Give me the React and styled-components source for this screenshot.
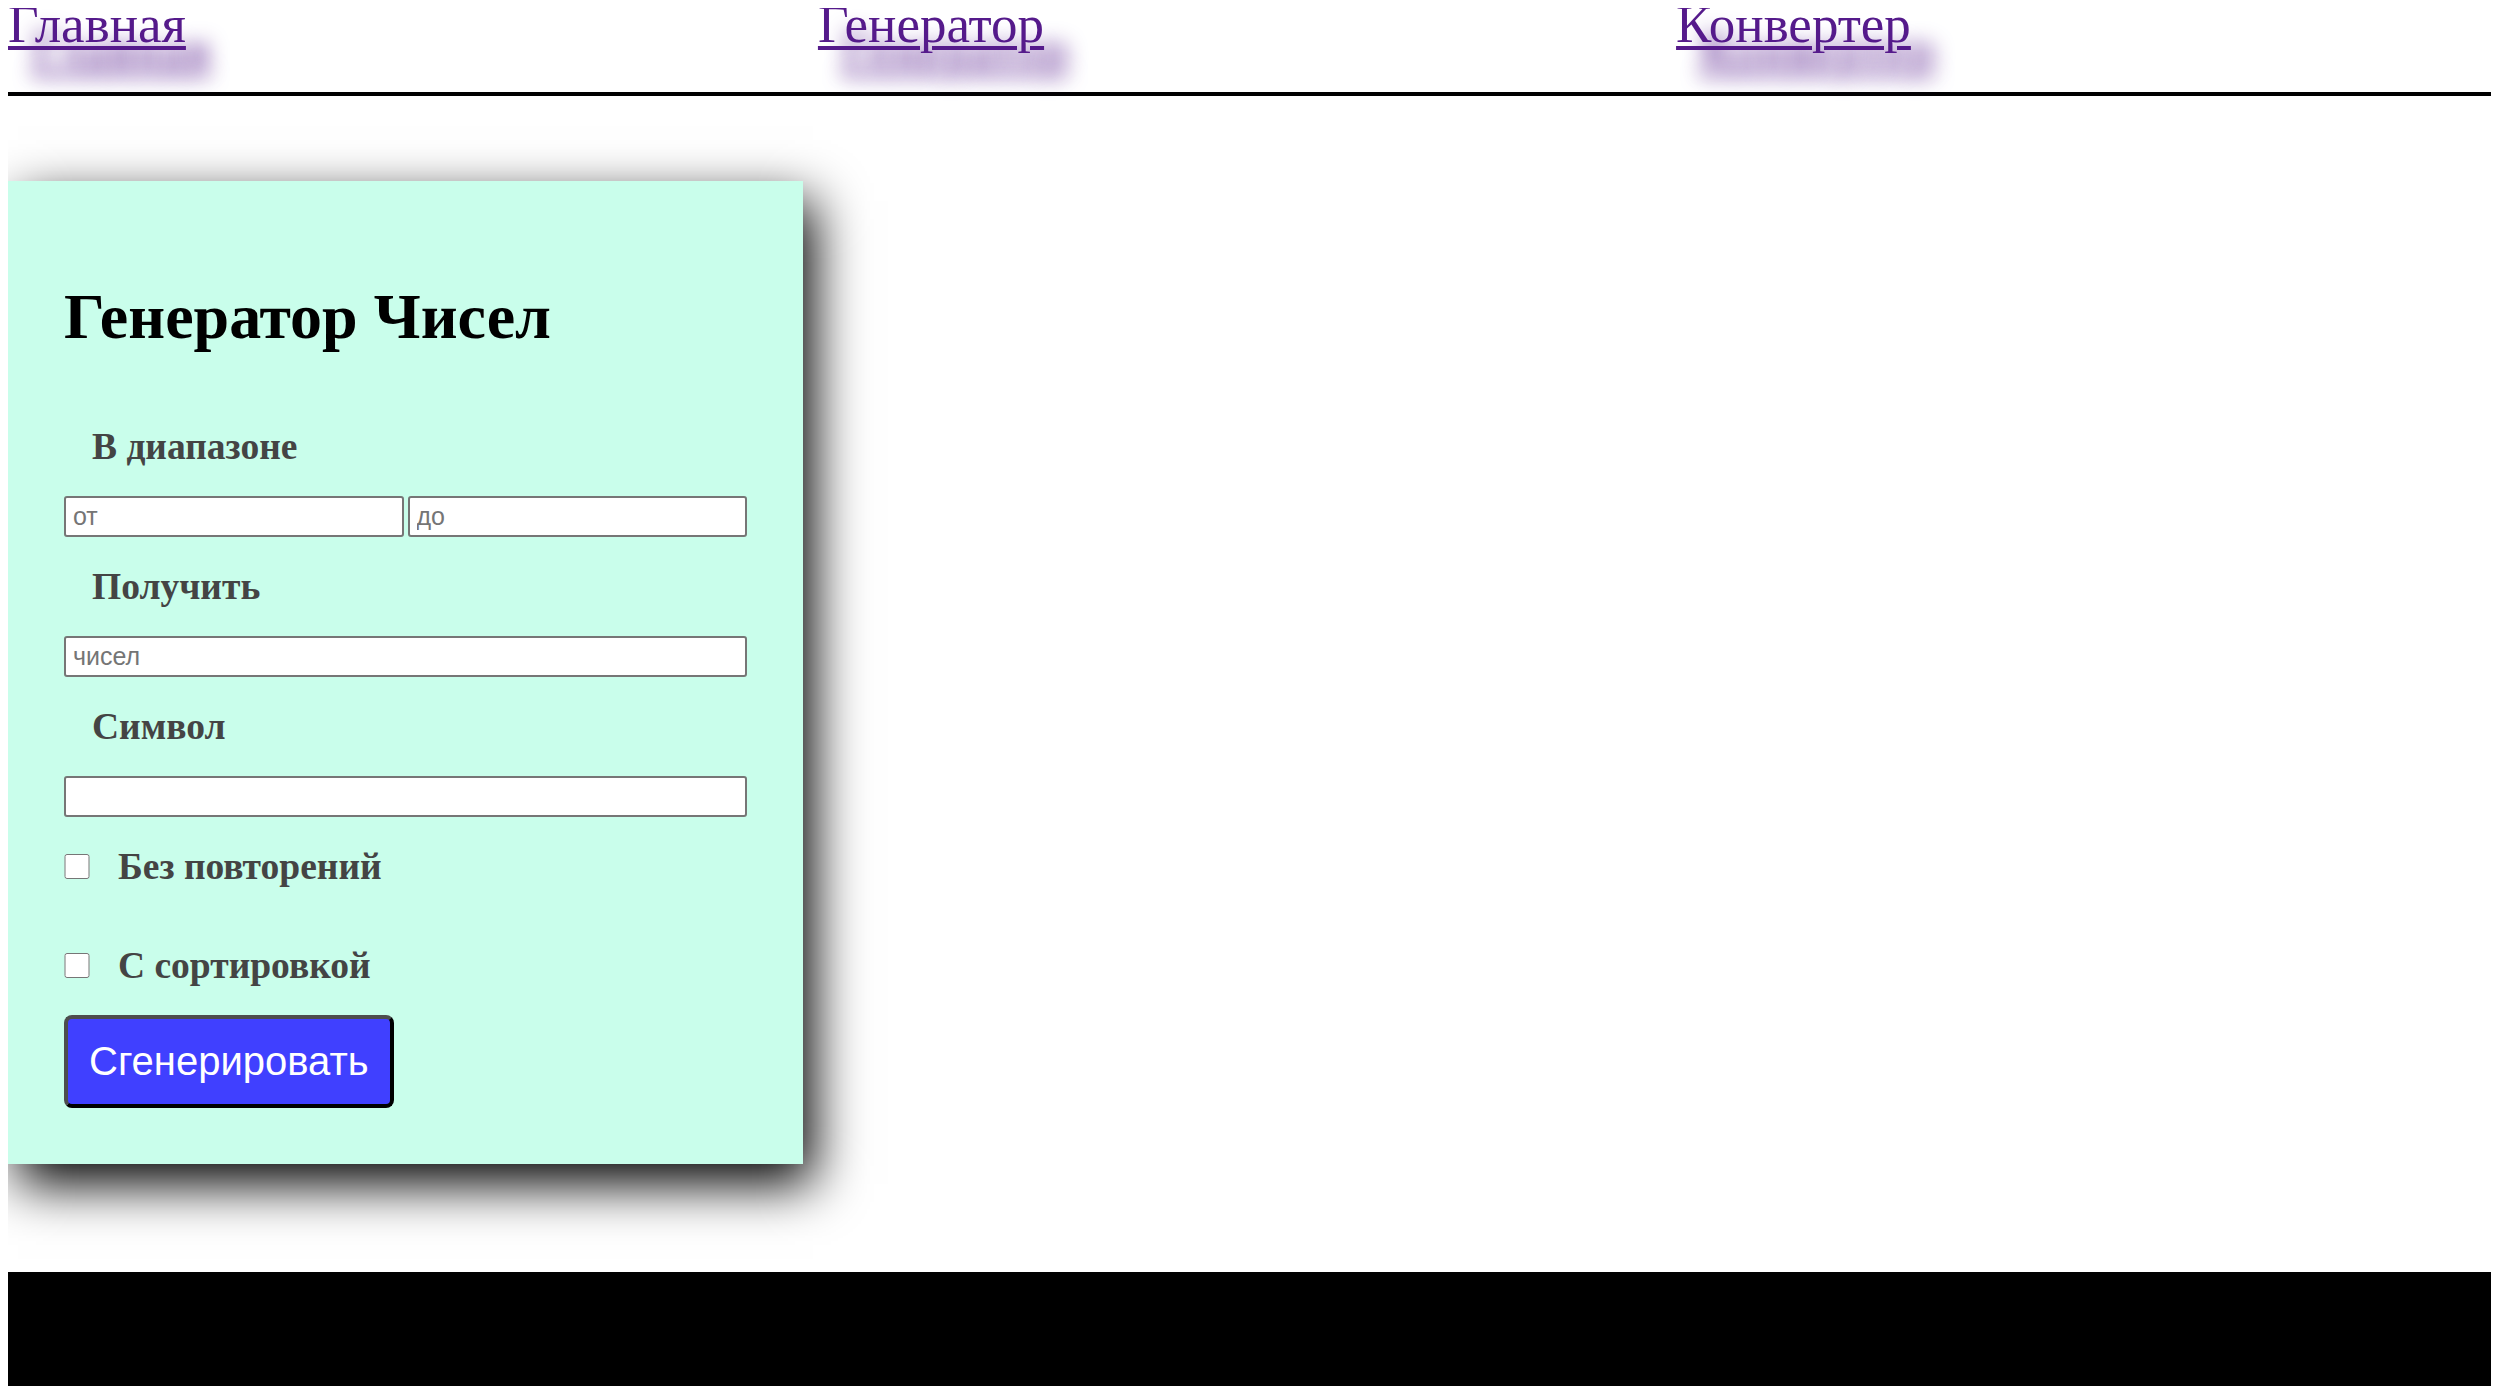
import styled, { createGlobalStyle } from "styled-components"

const GlobalStyle = createGlobalStyle`
  html {
    overflow: hidden;
  }

  body {
    margin: 8px 8px 0;
    font-family: "Liberation Serif", "Times New Roman", serif;
    background: #fff;
  }
`

const links = ["Главная", "Генератор", "Конвертер"]

const App = () => {
  return (
    <>
      <GlobalStyle />
      <Header>
        {links.map((label) => (
          <NavLink key={label} href="#">
            {label}
          </NavLink>
        ))}
      </Header>

      <Card>
        <Title>Генератор Чисел</Title>
        <Form onSubmit={(e) => e.preventDefault()}>
          <FieldLabel>В диапазоне</FieldLabel>
          <Row>
            <TextInput type="number" placeholder="от" />
            <TextInput type="number" placeholder="до" />
          </Row>

          <FieldLabel>Получить</FieldLabel>
          <TextInput type="number" placeholder="чисел" />

          <FieldLabel>Символ</FieldLabel>
          <TextInput type="text" />

          <CheckRow>
            <Checkbox type="checkbox" />
            Без повторений
          </CheckRow>
          <CheckRow>
            <Checkbox type="checkbox" />
            С сортировкой
          </CheckRow>

          <GenerateButton type="submit">Сгенерировать</GenerateButton>
        </Form>
      </Card>

      <Footer />
    </>
  )
}

const Header = styled.nav`
  display: flex;
  gap: 632px;
  box-sizing: border-box;
  height: 102px;
  margin: -14px -8px 0 0;
  border-bottom: 4px solid #000;
`

const NavLink = styled.a`
  font-size: 53px;
  line-height: 1.15;
  color: #551a8b;
  text-decoration: underline;
  text-decoration-thickness: 4px;
  text-underline-offset: 4px;
  text-shadow: 24px 26px 20px #551a8b;
`

const Card = styled.section`
  display: flex;
  flex-direction: column;
  width: 683px;
  margin-top: 85px;
  padding: 56px;
  background: #c9feeb;
  box-shadow: 10px 20px 50px #000;
`

const Title = styled.h1`
  margin: 43px 0;
  font-size: 64px;
  font-weight: 700;
  color: #000;
`

const Form = styled.form`
  display: flex;
  flex-direction: column;
`

const FieldLabel = styled.label`
  margin: 28px 0 28px 28px;
  font-size: 37.5px;
  font-weight: 700;
  color: #444;
`

const Row = styled.div`
  display: flex;
  gap: 4px;

  & > input {
    flex: 1;
  }
`

const TextInput = styled.input`
  min-width: 0;
  box-sizing: border-box;
  height: 41px;
  padding: 0 7px;
  border: 2px solid #767676;
  border-radius: 3px;
  background: #fff;
  font-family: "Liberation Sans", Arial, sans-serif;
  font-size: 25px;
  color: #000;

  &::placeholder {
    color: #757575;
  }

  &::-webkit-inner-spin-button,
  &::-webkit-outer-spin-button {
    -webkit-appearance: none;
    margin: 0;
  }
`

const CheckRow = styled.label`
  display: block;
  margin: 28px 0;
  font-size: 37.5px;
  font-weight: 700;
  color: #444;
`

const Checkbox = styled.input`
  width: 26px;
  height: 25px;
  margin: 0 28px 0 0;
  vertical-align: baseline;
`

const GenerateButton = styled.button`
  align-self: flex-start;
  padding: 20px 21px;
  border: 4px solid;
  border-color: #4d4d4d #000 #000 #4d4d4d;
  border-radius: 8px;
  background: #4040ff;
  font-family: "Liberation Sans", Arial, sans-serif;
  font-size: 40px;
  color: #fff;
  cursor: pointer;
`

const Footer = styled.footer`
  height: 160px;
  margin: 108px -8px 0 0;
  background: #000;
`

export default App
